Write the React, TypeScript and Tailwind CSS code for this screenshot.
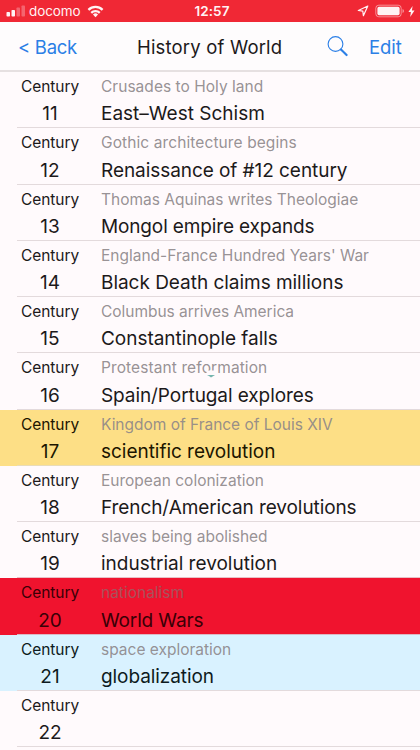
type Row = { century: number; sub: string; main: string; tone?: string; line?: string; subStyle?: string; mainStyle?: string; smudge?: boolean };

const rows: Row[] = [
  { century: 11, sub: 'Crusades to Holy land', main: 'East–West Schism', subStyle: 'tracking-[0.03px]' },
  { century: 12, sub: 'Gothic architecture begins', main: 'Renaissance of #12 century', subStyle: 'tracking-[0.1px]', mainStyle: 'tracking-[-0.06px]' },
  { century: 13, sub: 'Thomas Aquinas writes Theologiae', main: 'Mongol empire expands', mainStyle: 'tracking-[-0.14px]' },
  { century: 14, sub: "England-France Hundred Years' War", main: 'Black Death claims millions', mainStyle: 'tracking-[-0.03px]' },
  { century: 15, sub: 'Columbus arrives America', main: 'Constantinople falls', subStyle: 'tracking-[-0.03px]', mainStyle: 'tracking-[-0.03px]' },
  { century: 16, sub: 'Protestant reformation', main: 'Spain/Portugal explores', subStyle: 'tracking-[0.1px]', mainStyle: 'tracking-[-0.08px]', smudge: true },
  { century: 17, sub: 'Kingdom of France of Louis XIV', main: 'scientific revolution', subStyle: 'tracking-[-0.02px]', mainStyle: 'tracking-[-0.03px]', tone: 'bg-[#fddf86] text-[#1c1500]', line: 'border-[#e9dcb8]' },
  { century: 18, sub: 'European colonization', main: 'French/American revolutions', mainStyle: 'tracking-[-0.09px]' },
  { century: 19, sub: 'slaves being abolished', main: 'industrial revolution', line: 'border-[#e8c0c6]' },
  { century: 20, sub: 'nationalism', main: 'World Wars', subStyle: 'text-[#a8525b]', mainStyle: 'tracking-[-0.15px]', tone: 'bg-[#f0132e] text-[#3a0006]', line: 'border-[#dcb8c4]' },
  { century: 21, sub: 'space exploration', main: 'globalization', mainStyle: 'tracking-[-0.07px]', tone: 'bg-[#d9f2ff] text-[#0d1a20]' },
  { century: 22, sub: '', main: '' },
];

function StatusBar() {
  return (
    <div className="grid h-[22px] grid-cols-[1fr_auto_1fr] items-center bg-[#f02835] text-[#fff3f4]">
      <div className="flex items-center pl-[6px]">
        <svg width="20" height="12" viewBox="0 0 20 12" fill="currentColor">
          <rect x="0.5" y="7" width="3.5" height="4.5" rx="0.8" />
          <rect x="5.5" y="5" width="3.5" height="6.5" rx="0.8" />
          <rect x="10.5" y="2.5" width="3.5" height="9" rx="0.8" opacity="0.3" />
          <rect x="15.5" y="0.5" width="3.5" height="11" rx="0.8" opacity="0.3" />
        </svg>
        <span className="ml-[3px] text-[13.5px] leading-[22px] tracking-[-0.1px]">docomo</span>
        <svg className="ml-[6px]" width="17" height="13" viewBox="0 0 18 13" fill="none" stroke="currentColor" strokeWidth="2.4">
          <path d="M1.5 4.8a10.6 10.6 0 0 1 15 0" />
          <path d="M4.5 8a6.4 6.4 0 0 1 9 0" />
          <path d="M9 12.6 6.3 9.8a3.8 3.8 0 0 1 5.4 0Z" fill="currentColor" stroke="none" />
        </svg>
      </div>
      <span className="translate-x-[2px] text-[13.5px] font-semibold tracking-[0.1px]">12:57</span>
      <div className="flex items-center justify-end pr-[5px]">
        <svg width="12" height="12" viewBox="0 0 12 12" fill="none" stroke="currentColor" strokeWidth="1.2" strokeLinejoin="round">
          <path d="M10.8 1 1.3 5.5l4.5.6.6 4.6Z" />
        </svg>
        <svg className="ml-[6px]" width="30" height="14" viewBox="0 0 30 14">
          <rect x="0.8" y="1.2" width="25.4" height="11.6" rx="3" fill="none" stroke="currentColor" strokeOpacity="0.5" />
          <rect x="2.4" y="2.8" width="22.2" height="8.4" rx="1.6" fill="currentColor" />
          <path d="M27.5 5v4q1.6-.5 1.6-2t-1.6-2" fill="currentColor" opacity="0.5" />
        </svg>
        <svg className="ml-[3px]" width="7" height="11" viewBox="0 0 7 11" fill="currentColor">
          <path d="M4.6 0 .4 6.1h2.5L2.2 11l4.3-6.4H3.9Z" />
        </svg>
      </div>
    </div>
  );
}

function NavBar() {
  return (
    <div className="flex h-[50px] items-center border-b-2 border-[#e6e0e1] bg-[#fefcfd] text-[18.5px] leading-[24px] text-[#2b7fe6]">
      <span className="w-[137px] pt-[2px] pl-[18px] tracking-[-0.3px]">&lt; Back</span>
      <span className="w-[190px] whitespace-nowrap pt-[2px] tracking-[0.18px] text-[#1c191a]">History of World</span>
      <svg width="21" height="21" viewBox="0 0 21 21" fill="none" stroke="currentColor">
        <circle cx="8.5" cy="8" r="7.4" strokeWidth="1.1" />
        <path d="m14 13.5 5.6 5.6" strokeWidth="2.1" strokeLinecap="round" />
      </svg>
      <span className="ml-[21px] pt-[2px] tracking-[-0.1px]">Edit</span>
    </div>
  );
}

function CenturyRow({ century, sub, main, tone, line, subStyle, mainStyle, smudge }: Row) {
  return (
    <div className={`flex h-[56.25px] shrink-0 ${tone ?? 'text-[#1c191a]'}`}>
      <div className={`ml-[17px] flex flex-1 border-b ${line ?? 'border-[#e3dadc]'}`}>
        <div className="flex w-[66px] flex-col items-center">
          <span className="mt-[4px] text-[15.5px] leading-[22px] tracking-[-0.05px]">Century</span>
          <span className="mt-[4.4px] text-[19px] leading-[24px]">{century}</span>
        </div>
        <div className="ml-[18px] flex flex-col whitespace-nowrap">
          <span className={`relative mt-[4px] h-[22px] text-[15.5px] leading-[22px] ${subStyle ?? ''} ${century === 20 ? '' : 'text-[#8b8588]/90'}`}>
            {sub}
            {smudge && (
              <svg className="absolute top-[9px] left-[103px]" width="15" height="13" viewBox="0 0 15 13">
                <path d="M2 4.5h10l-1 3.5H3Z" fill="#fffafc" />
                <path d="M3 9h8L7 11.5 5 10Z" fill="#76b5ae" />
              </svg>
            )}
          </span>
          <span className={`mt-[4.4px] text-[19px] leading-[24px] ${mainStyle ?? ''}`}>{main}</span>
        </div>
      </div>
    </div>
  );
}

export default function App() {
  return (
    <div className="flex h-[750px] w-[420px] flex-col overflow-hidden bg-[#fffafc] font-['Inter',sans-serif]">
      <StatusBar />
      <NavBar />
      {rows.map((row) => (
        <CenturyRow key={row.century} {...row} />
      ))}
    </div>
  );
}
